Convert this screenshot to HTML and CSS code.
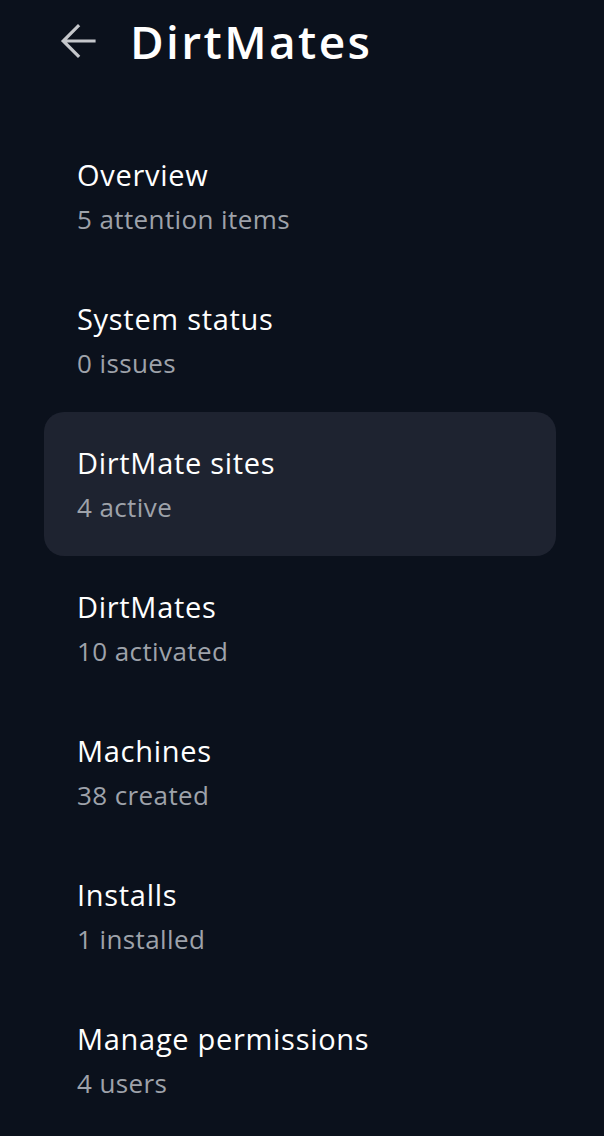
FILE: index.html
```html
<!DOCTYPE html>
<html lang="en">
<head>
<meta charset="utf-8">
<title>DirtMates</title>
<link rel="stylesheet" href="styles.css">
</head>
<body>
<div class="screen">
  <header class="topbar">
    <button class="back" aria-label="Back">
      <svg viewBox="0 0 24 24" width="48" height="48"><path d="M20 12H5M12 4.6L4.6 12 12 19.4" fill="none" stroke="currentColor" stroke-width="1.6" stroke-linecap="square"/></svg>
    </button>
    <h1 class="title">DirtMates</h1>
  </header>
  <nav class="menu">
    <div class="item"><div class="label">Overview</div><div class="sub">5 attention items</div></div>
    <div class="item"><div class="label">System status</div><div class="sub">0 issues</div></div>
    <div class="item active"><div class="label">DirtMate sites</div><div class="sub">4 active</div></div>
    <div class="item"><div class="label">DirtMates</div><div class="sub">10 activated</div></div>
    <div class="item"><div class="label">Machines</div><div class="sub">38 created</div></div>
    <div class="item"><div class="label">Installs</div><div class="sub">1 installed</div></div>
    <div class="item"><div class="label">Manage permissions</div><div class="sub">4 users</div></div>
  </nav>
</div>
</body>
</html>
```
FILE: styles.css
```css
html, body {
  margin: 0;
  padding: 0;
  background: #0b111c;
  height: 100%;
  overflow: hidden;
}
.screen {
  width: 604px;
  height: 1136px;
  background: #0b111c;
  font-family: "Open Sans", "Noto Sans", sans-serif;
  color: #ffffff;
}
.topbar {
  display: flex;
  align-items: center;
  height: 82px;
  padding-left: 54px;
  gap: 28px;
}
.back {
  width: 48px;
  height: 48px;
  padding: 0;
  border: 0;
  background: none;
  color: #c5c7cb;
  display: flex;
}
.title {
  margin: 0;
  font-family: "Open Sans", sans-serif;
  font-weight: 600;
  font-size: 46px;
  letter-spacing: 2.4px;
  line-height: 1;
  color: #ffffff;
}
.menu {
  padding: 42px 48px 0 44px;
  display: flex;
  flex-direction: column;
}
.item {
  height: 144px;
  box-sizing: border-box;
  padding: 2px 33px 0;
  display: flex;
  flex-direction: column;
  justify-content: center;
  gap: 4px;
  border-radius: 20px;
}
.item.active {
  background: #1e2330;
}
.label {
  font-size: 29px;
  letter-spacing: 0.7px;
  line-height: 40px;
  color: #ffffff;
}
.sub {
  font-size: 26px;
  letter-spacing: 0.4px;
  line-height: 40px;
  color: #9ea2aa;
}
```
